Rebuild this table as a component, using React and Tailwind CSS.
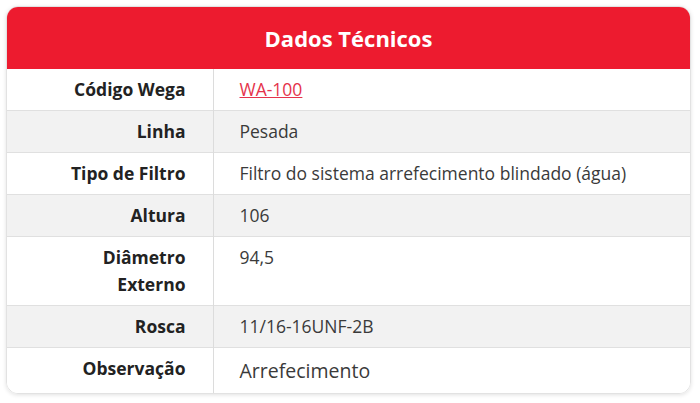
import React from 'react';

const rows = [
  { label: 'Código Wega', value: 'WA-100', link: true },
  { label: 'Linha', value: 'Pesada' },
  { label: 'Tipo de Filtro', value: 'Filtro do sistema arrefecimento blindado (água)' },
  { label: 'Altura', value: '106' },
  { label: 'Diâmetro Externo', value: '94,5', wrap: true },
  { label: 'Rosca', value: '11/16-16UNF-2B' },
  { label: 'Observação', value: 'Arrefecimento', big: true },
];

export default function App() {
  return (
    <div className="min-h-[403px] bg-white pt-[6px] pl-[6px] pr-[9px] font-['Open_Sans',sans-serif]">
      <div className="overflow-hidden rounded-[12px] border border-[#e2e2e2] shadow-[0_1px_4px_rgba(0,0,0,0.12)]">
        <div className="flex h-[62px] items-center justify-center bg-[#ed1b2f]">
          <h2 className="text-[22px] font-bold text-white">Dados Técnicos</h2>
        </div>
        <table className="w-full border-collapse text-[17.5px] leading-[27px] text-[#3a3a3a]">
          <tbody>
            {rows.map((r, i) => (
              <tr key={r.label} className={`${i % 2 ? 'bg-[#f2f2f2]' : 'bg-white'} ${i ? 'border-t border-[#e0e0e0]' : ''}`}>
                <th className="w-[206px] border-r border-[#dcdcdc] py-[7px] pl-[14px] pr-[27px] text-right align-top font-bold text-[#222]">
                  {r.wrap ? (
                    <>
                      Diâmetro
                      <br />
                      Externo
                    </>
                  ) : (
                    r.label
                  )}
                </th>
                <td className={`py-[7px] pl-[26px] align-top ${r.big ? 'text-[19.5px] leading-[31px]' : ''}`}>
                  {r.link ? (
                    <a href="#" className="text-[#e5334b] underline">
                      {r.value}
                    </a>
                  ) : (
                    r.value
                  )}
                </td>
              </tr>
            ))}
          </tbody>
        </table>
      </div>
    </div>
  );
}
